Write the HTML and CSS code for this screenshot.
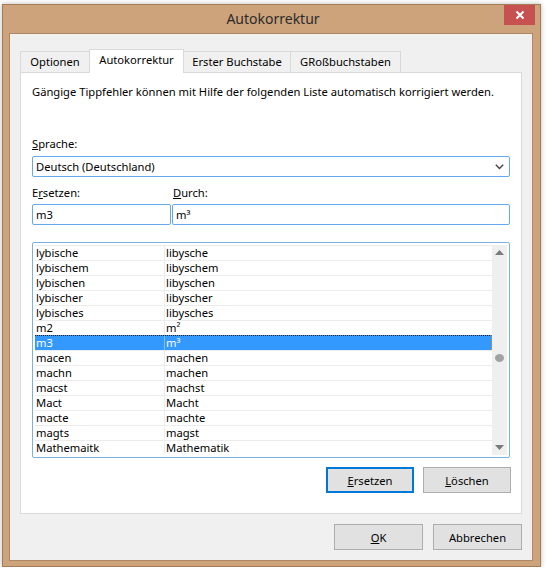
FILE: index.html
```html
<!DOCTYPE html>
<html lang="de">
<head>
<meta charset="utf-8">
<title>Autokorrektur</title>
<link rel="stylesheet" href="styles.css">
</head>
<body>
<div class="window">
  <div class="titlebar">
    <span class="tb-spacer"></span>
    <div class="title">Autokorrektur</div>
    <div class="close">
      <svg width="10" height="10" viewBox="0 0 10 10"><path d="M1.5 1.5 L8.5 8.5 M8.5 1.5 L1.5 8.5" stroke="#fff" stroke-width="2" fill="none"/></svg>
    </div>
  </div>
  <div class="client">
    <div class="tabs">
      <div class="tab tab-opt">Optionen</div>
      <div class="tab tab-auto active">Autokorrektur</div>
      <div class="tab tab-erst">Erster Buchstabe</div>
      <div class="tab tab-gross">GRoßbuchstaben</div>
    </div>
    <div class="panel">
      <p class="desc">Gängige Tippfehler können mit Hilfe der folgenden Liste automatisch korrigiert werden.</p>
      <div class="lbl lbl-lang"><u>S</u>prache:</div>
      <div class="select">
        <span>Deutsch (Deutschland)</span>
        <svg class="chev" width="9" height="6" viewBox="0 0 9 6"><path d="M0.8 0.8 L4.5 4.5 L8.2 0.8" stroke="#444" stroke-width="1.4" fill="none"/></svg>
      </div>
      <div class="fields">
        <div class="field">
          <div class="lbl">E<u>r</u>setzen:</div>
          <div class="input">m3</div>
        </div>
        <div class="field">
          <div class="lbl lbl-with"><u>D</u>urch:</div>
          <div class="input">m³</div>
        </div>
      </div>
      <div class="list">
        <div class="rows">
          <div class="row"><div class="c1">lybische</div><div class="c2">libysche</div></div>
          <div class="row"><div class="c1">lybischem</div><div class="c2">libyschem</div></div>
          <div class="row"><div class="c1">lybischen</div><div class="c2">libyschen</div></div>
          <div class="row"><div class="c1">lybischer</div><div class="c2">libyscher</div></div>
          <div class="row"><div class="c1">lybisches</div><div class="c2">libysches</div></div>
          <div class="row"><div class="c1">m2</div><div class="c2">m²</div></div>
          <div class="row selected"><div class="c1">m3</div><div class="c2">m³</div></div>
          <div class="row"><div class="c1">macen</div><div class="c2">machen</div></div>
          <div class="row"><div class="c1">machn</div><div class="c2">machen</div></div>
          <div class="row"><div class="c1">macst</div><div class="c2">machst</div></div>
          <div class="row"><div class="c1">Mact</div><div class="c2">Macht</div></div>
          <div class="row"><div class="c1">macte</div><div class="c2">machte</div></div>
          <div class="row"><div class="c1">magts</div><div class="c2">magst</div></div>
          <div class="row"><div class="c1">Mathemaitk</div><div class="c2">Mathematik</div></div>
        </div>
        <div class="scrollbar">
          <svg class="sb-arrow" width="9" height="5" viewBox="0 0 9 5"><path d="M0 5 L4.5 0 L9 5 Z" fill="#7a7a7a"/></svg>
          <div class="thumb"></div>
          <svg class="sb-arrow sb-down" width="9" height="5" viewBox="0 0 9 5"><path d="M0 0 L4.5 5 L9 0 Z" fill="#7a7a7a"/></svg>
        </div>
      </div>
      <div class="panel-buttons">
        <button class="btn btn-default"><u>E</u>rsetzen</button>
        <button class="btn"><u>L</u>öschen</button>
      </div>
    </div>
    <div class="dialog-buttons">
      <button class="btn btn-dlg"><u>O</u>K</button>
      <button class="btn btn-dlg">Abbrechen</button>
    </div>
  </div>
</div>
</body>
</html>
```
FILE: styles.css
```css
* { box-sizing: border-box; }
html, body { margin: 0; padding: 0; background: #fff; }
body {
  font-family: "Noto Sans", "Open Sans", sans-serif;
  font-size: 11.2px;
  color: #000;
}
u { text-decoration: underline; text-underline-offset: 1px; }

.window {
  margin: 4px 0 0 2px;
  width: 539px;
  height: 563px;
  background: #cca37a;
  border: 1px solid #a47d58;
  box-shadow: 0 0 5px rgba(0, 0, 0, 0.28);
  padding: 0 7px 5px 6px;
  display: flex;
  flex-direction: column;
}

.titlebar {
  height: 28px;
  display: grid;
  grid-template-columns: 1fr auto 1fr;
  align-items: start;
}
.title {
  font-size: 14px;
  line-height: 28px;
  color: #2b2b2b;
  padding-left: 4px;
}
.close {
  justify-self: end;
  width: 31px;
  height: 20px;
  margin-right: -2px;
  background: #c75050;
  display: flex;
  align-items: center;
  justify-content: center;
}

.client {
  height: 528px;
  background: #f0f0f0;
  border: 1px solid #ae8864;
  display: flex;
  flex-direction: column;
}

.tabs {
  display: flex;
  align-items: flex-end;
  height: 24px;
  margin: 15px 0 -1px 10px;
  position: relative;
  z-index: 1;
}
.tab {
  height: 21px;
  margin-bottom: 1px;
  border: 1px solid #d9d9d9;
  border-bottom: none;
  background: #f0f0f0;
  line-height: 19px;
  text-align: center;
  white-space: nowrap;
  margin-left: -1px;
}
.tab-opt { width: 70px; margin-left: 0; }
.tab-auto { width: 95px; }
.tab-erst { width: 108px; }
.tab-gross { width: 111px; }
.tab.active {
  height: 24px;
  margin-bottom: 0;
  background: #fff;
  line-height: 20px;
  position: relative;
  z-index: 2;
}

.panel {
  margin-left: 10px;
  width: 502px;
  height: 442px;
  background: #fff;
  border: 1px solid #d9d9d9;
  padding: 0 11px;
}
.desc {
  margin: 11px 0 0;
  line-height: 16px;
  height: 16px;
  white-space: nowrap;
}
.lbl {
  line-height: 16px;
  height: 16px;
}
.lbl-lang { margin-top: 36px; }
.lbl-with { padding-left: 1px; }

.select {
  margin-top: 4px;
  height: 21px;
  border: 1px solid #64a9f0;
  border-radius: 2px;
  padding: 0 5px 0 3px;
  display: flex;
  align-items: center;
  justify-content: space-between;
}
.chev { margin-top: 1px; }

.fields {
  margin-top: 8px;
  display: grid;
  grid-template-columns: 139px 338px;
  column-gap: 1px;
}
.input {
  margin-top: 3px;
  height: 21px;
  border: 1px solid #64a9f0;
  border-radius: 2px;
  padding: 0 3px;
  line-height: 19px;
}

.list {
  margin-top: 17px;
  height: 216px;
  border: 1px solid #7ab0e8;
  border-radius: 2px;
  padding: 2px;
  display: flex;
  overflow: hidden;
}
.rows {
  width: 457px;
}
.row {
  height: 15px;
  border-top: 1px solid #ececec;
  display: flex;
  line-height: 14px;
  white-space: nowrap;
}
.c1 {
  width: 130px;
  padding-left: 1px;
  border-right: 1px solid #ececec;
}
.c2 {
  flex: 1;
  padding-left: 1px;
}
.row.selected {
  background: #3399ff;
  color: #fff;
  border-top: 1px dotted #1a1a1a;
  border-right: 1px dotted #d9893a;
}
.row.selected .c1 { border-right-color: #7fbfff; }

.scrollbar {
  width: 15px;
  background: #efefef;
  display: flex;
  flex-direction: column;
  align-items: center;
  padding: 5px 0 5px;
}
.thumb {
  margin-top: 99px;
  width: 9px;
  height: 8px;
  border-radius: 50%;
  background: #a2a2a2;
}
.sb-down { margin-top: auto; }

.btn {
  font-family: inherit;
  font-size: 11.2px;
  color: #000;
  background: #e1e1e1;
  border: 1px solid #adadad;
  height: 26px;
  padding: 0;
  margin: 0;
}
.btn-default { border: 2px solid #0078d7; }

.panel-buttons {
  margin-top: 9px;
  margin-right: -1px;
  display: flex;
  justify-content: flex-end;
  gap: 9px;
}
.panel-buttons .btn { width: 88px; }

.dialog-buttons {
  margin-top: 10px;
  padding-right: 10px;
  display: flex;
  justify-content: flex-end;
  gap: 10px;
}
.btn-dlg { width: 89px; }
```
